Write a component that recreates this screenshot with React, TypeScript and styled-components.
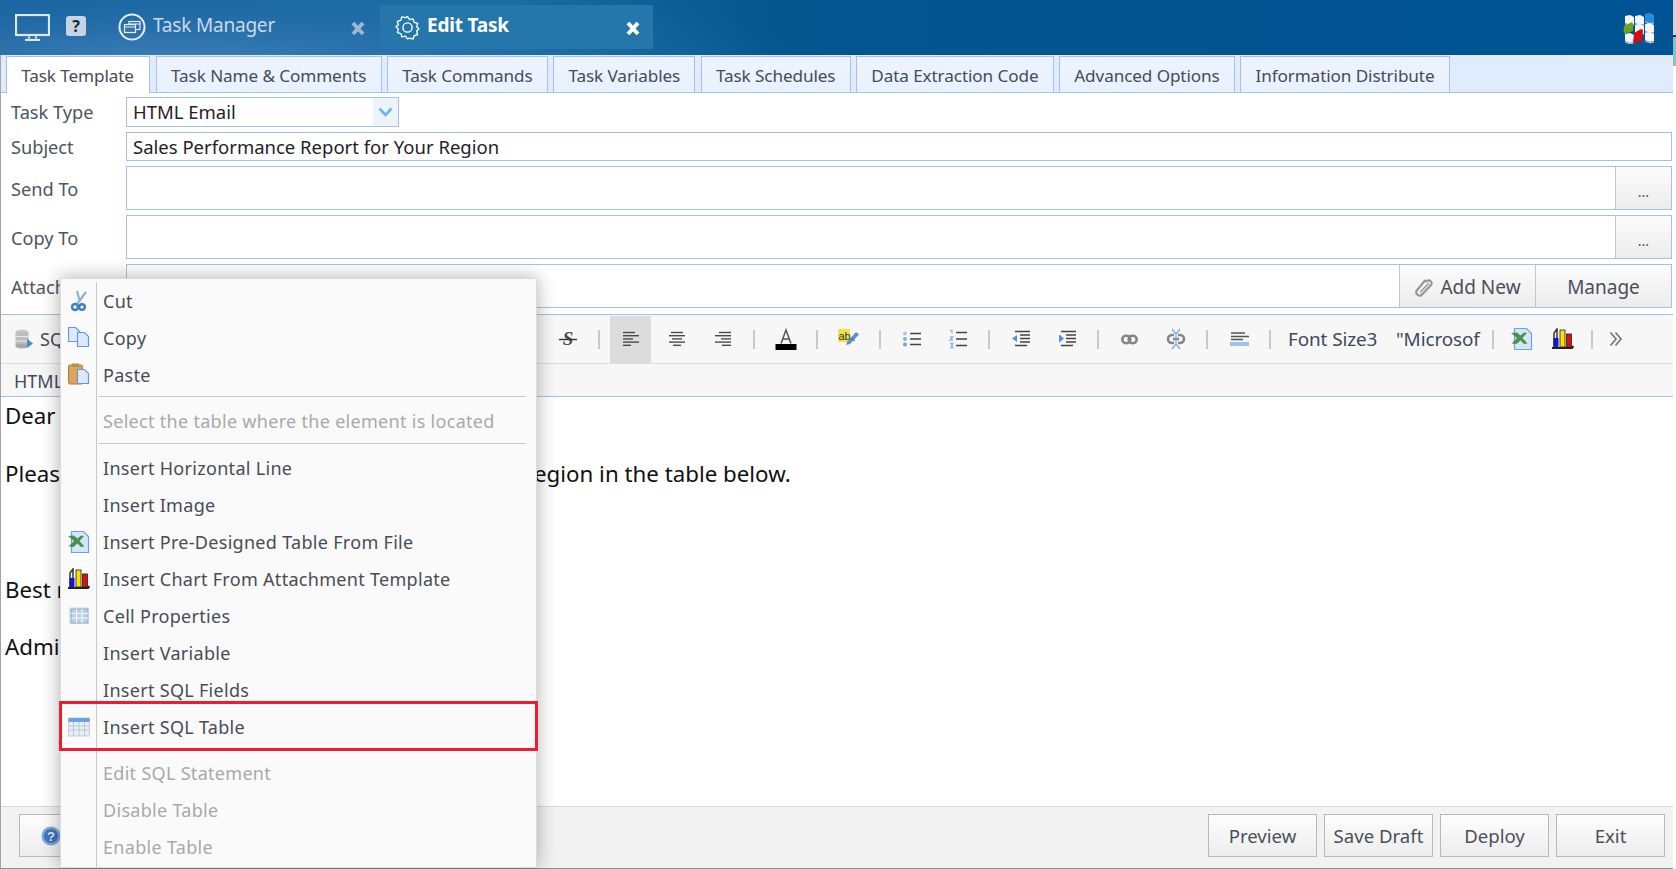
import React from 'react';
import styled, { createGlobalStyle } from 'styled-components';

const GlobalStyle = createGlobalStyle`
  html, body {
    margin: 0;
    padding: 0;
    background: #fff;
    overflow: hidden;
  }
  * {
    box-sizing: border-box;
  }
`;

const Page = styled.div`
  width: 1676px;
  height: 869px;
  display: flex;
  font-family: 'Noto Sans', 'Liberation Sans', sans-serif;
  color: #444c58;
`;

const Edge = styled.div`
  width: 3px;
  background: linear-gradient(180deg, #d4d4d4 0, #d4d4d4 35px, #333 35px, #333 37px, #79c9c0 37px, #79c9c0 66px, #fff 66px);
`;

const Shell = styled.div`
  position: relative;
  width: 1673px;
  display: flex;
  flex-direction: column;
`;

const Header = styled.div`
  height: 55px;
  flex: none;
  display: flex;
  align-items: flex-start;
  padding-left: 15px;
  background:
    radial-gradient(ellipse 640px 90px at 170px 62px, #3a7db5 0, rgba(40, 110, 170, 0.55) 55%, rgba(20, 90, 150, 0) 100%),
    linear-gradient(90deg, #14609d 0, #196ca4 30%, #04568f 46%, #005493 100%);
`;

const MonitorSlot = styled.div`
  width: 51px;
  height: 27px;
  margin-top: 14px;
`;

const HelpBadge = styled.div`
  width: 20px;
  height: 20px;
  margin-top: 16px;
  border-radius: 3px;
  background: #c5d5e5;
  color: #1b2a3a;
  font-size: 16px;
  font-weight: 700;
  line-height: 20px;
  text-align: center;
`;

const ManagerTab = styled.div`
  width: 262px;
  height: 44px;
  margin: 5px 0 0 32px;
  display: flex;
  align-items: center;
  color: #c9dae8;
  font-size: 19px;
  letter-spacing: -0.2px;
`;

const EditTab = styled(ManagerTab)`
  width: 273px;
  margin-left: 0;
  padding-left: 15px;
  background: #2577ab;
  color: #fff;
  font-weight: 700;
`;

const HeaderLabel = styled.span`
  margin-left: 7px;
  flex: 1;
  position: relative;
  top: -2px;
`;

const CloseMark = styled.span<{ $dim?: boolean }>`
  display: flex;
  position: relative;
  top: 1px;
  margin-right: ${(props) => (props.$dim ? '15px' : '13px')};
  color: ${(props) => (props.$dim ? '#9ab8cf' : '#fff')};
`;

const LogoSlot = styled.div`
  margin: 12px 19px 0 auto;
`;

const Main = styled.div`
  flex: 1;
  min-height: 0;
  display: flex;
  flex-direction: column;
  border-left: 1px solid #a4a4a4;
  border-bottom: 1px solid #8e8e8e;
`;

const TabBar = styled.div`
  height: 38px;
  flex: none;
  display: flex;
  gap: 5.5px;
  align-items: flex-end;
  padding-left: 5px;
  background: #e0ecfc;
  border-bottom: 1px solid #a3c2ea;
`;

const Tab = styled.div<{ $active?: boolean }>`
  height: ${(props) => (props.$active ? '37px' : '36px')};
  margin-bottom: ${(props) => (props.$active ? '-1px' : '0')};
  padding: 1px ${(props) => (props.$active ? 15.5 : 14.15)}px 0 14.15px;
  display: flex;
  align-items: center;
  font-size: 17.15px;
  letter-spacing: -0.1px;
  white-space: nowrap;
  color: #444c58;
  background: ${(props) => (props.$active ? '#fff' : 'linear-gradient(180deg, #eef4ff, #e8f1fe)')};
  border: 1px solid #a3c2ea;
  border-bottom: ${(props) => (props.$active ? 'none' : '0')};
`;

const Form = styled.div`
  flex: none;
  display: flex;
  flex-direction: column;
  gap: 5px;
  padding: 4px 1px 6px 10px;
`;

const FormRow = styled.div<{ $height: number }>`
  height: ${(props) => props.$height}px;
  display: flex;
  align-items: center;
`;

const FieldLabel = styled.div`
  width: 115px;
  flex: none;
  font-size: 18.2px;
  color: #4d5560;
`;

const TallLabel = styled(FieldLabel)`
  padding-top: 2px;
`;

const Field = styled.div<{ $width?: number }>`
  flex: ${(props) => (props.$width ? 'none' : '1')};
  width: ${(props) => (props.$width ? `${props.$width}px` : 'auto')};
  height: 100%;
  display: flex;
  align-items: center;
  border: 1px solid #a3c2ea;
  background: #fff;
`;

const FieldValue = styled.div`
  flex: 1;
  padding-left: 6px;
  font-size: 18.5px;
  color: #1f2328;
`;

const SelectValue = styled(FieldValue)`
  padding-bottom: 2px;
`;

const SelectArrow = styled.div`
  width: 25px;
  height: 100%;
  display: flex;
  align-items: center;
  justify-content: center;
  background: #edf3fb;
`;

const FieldButton = styled.div<{ $width: number }>`
  width: ${(props) => props.$width}px;
  flex: none;
  height: 100%;
  padding-top: 2px;
  display: flex;
  align-items: center;
  justify-content: center;
  gap: 6px;
  font-size: 19px;
  color: #46505c;
  background: linear-gradient(180deg, #fcfcfc, #ececec);
  border-left: 1px solid #c6c6c6;
`;

const Ellipsis = styled.span`
  font-size: 14px;
  position: relative;
  top: 2px;
`;

const Toolbar = styled.div`
  height: 50px;
  flex: none;
  display: flex;
  align-items: center;
  background: #f7f7f7;
  border-top: 1px solid #a3c2ea;
  border-bottom: 1px solid #d6dee6;
`;

const SourceGroup = styled.div`
  width: 543.5px;
  flex: none;
  display: flex;
  align-items: center;
  gap: 6px;
  padding-left: 13px;
  font-size: 18px;
`;

const ToolButton = styled.div<{ $active?: boolean; $tight?: boolean; $width?: number }>`
  width: ${(props) => props.$width ?? 41}px;
  height: 47px;
  margin: 0 ${(props) => (props.$tight ? 0 : 2.5)}px;
  flex: none;
  display: flex;
  align-items: center;
  justify-content: center;
  background: ${(props) => (props.$active ? '#dcdcdc' : 'transparent')};
`;

const ToolSep = styled.div`
  width: 2px;
  height: 19px;
  margin: 0 7.5px;
  flex: none;
  background: #c9c9c9;
`;

const FontGroup = styled.div`
  margin-left: 9.5px;
  flex: none;
  display: flex;
`;

const ToolText = styled.div<{ $width: number }>`
  width: ${(props) => props.$width}px;
  flex: none;
  font-size: 18.9px;
  letter-spacing: -0.1px;
  white-space: nowrap;
  color: #3d4a5c;
`;

const ModeBar = styled.div`
  height: 33px;
  flex: none;
  padding: 5px 0 0 13px;
  font-size: 18px;
  background: #f7f7f7;
  border-bottom: 1px solid #a3c2ea;
`;

const Editor = styled.div`
  flex: 1;
  min-height: 0;
  padding: 2px 0 0 4px;
  color: #111;
  font-size: 22.3px;
  background: #fff;
`;

const Para = styled.p`
  margin: 0 0 23px;
  height: 34px;
  line-height: 34px;
  white-space: nowrap;

  &:first-child {
    margin-bottom: 24px;
  }
`;

const BlankLine = styled.div`
  height: 36px;
  margin-bottom: 23px;
`;

const Footer = styled.div`
  height: 62px;
  flex: none;
  display: flex;
  align-items: flex-start;
  gap: 7px;
  padding: 7px 8px 0 18px;
  background: #f2f2f2;
  border-top: 1px solid #d9d9d9;
`;

const FooterButton = styled.div<{ $pushRight?: boolean }>`
  width: 109px;
  height: 43px;
  padding-bottom: 1px;
  margin-left: ${(props) => (props.$pushRight ? 'auto' : '0')};
  display: flex;
  align-items: center;
  justify-content: center;
  font-size: 18.6px;
  color: #4a505a;
  background: linear-gradient(180deg, #fdfdfd, #ededed);
  border: 1px solid #b8b8b8;
`;

const HelpButton = styled(FooterButton)`
  justify-content: flex-start;
  padding: 0 0 0 21px;
`;

const Menu = styled.div`
  position: absolute;
  left: 60px;
  top: 278px;
  width: 477px;
  height: 590px;
  padding-top: 3px;
  background: #fafafa;
  border: 1px solid #dcdcdc;
  box-shadow: 0 0 18px rgba(0, 0, 0, 0.32);
  display: flex;
  flex-direction: column;
`;

const MenuItem = styled.div<{ $disabled?: boolean }>`
  height: 37px;
  flex: none;
  display: flex;
  align-items: center;
  font-size: 18px;
  letter-spacing: 0.3px;
  color: ${(props) => (props.$disabled ? '#a9a9a9' : '#474d57')};
`;

const Gutter = styled.div`
  width: 36px;
  height: 100%;
  flex: none;
  display: flex;
  align-items: center;
  justify-content: center;
  border-right: 1px solid #c9c9c9;
`;

const MenuLabel = styled.span`
  margin-left: 6px;
`;

const MenuSep = styled.div`
  height: 9.5px;
  flex: none;
  display: flex;
`;

const SepLine = styled.div`
  flex: 1;
  height: 1px;
  margin: 3px 10px 0 1px;
  background: #c9c9c9;
`;

const MenuFill = styled.div`
  flex: 1;
  display: flex;
`;

const Marker = styled.div`
  position: absolute;
  left: -2px;
  top: 422px;
  width: 479px;
  height: 50px;
  border: 3px solid #ee1c2e;
`;

const MonitorIcon = () => (
  <svg width="35" height="27" viewBox="0 0 35 27" fill="none" stroke="#dfe8f1" strokeWidth="2.200">
    <rect x="1" y="1" width="33" height="20" />
    <path d="M14 22.500v2M21 22.500v2" />
    <path d="M10 26h15" />
  </svg>
);

const WindowsCircleIcon = () => (
  <svg width="28" height="28" viewBox="0 0 28 28" fill="none" stroke="#e6eef5">
    <circle cx="14" cy="14" r="12.500" strokeWidth="2" />
    <rect x="11" y="8.500" width="11" height="8" strokeWidth="1.200" />
    <rect x="6.500" y="11.500" width="11" height="8" strokeWidth="1.200" fill="#3474a8" />
    <path d="M6.500 14h11M11 11h11" strokeWidth="1" />
  </svg>
);

const GearIcon = () => (
  <svg width="25" height="27" viewBox="0 0 24 24" fill="none" stroke="#fff" strokeWidth="1.300" strokeLinejoin="round">
    <path d="M12 1.500l2 3 3.400-.7 1 3.300 3.300 1-.9 3.400 2.200 1.500-2.200 2.600.9 3.300-3.300 1-1 3.100-3.400-.7L12 23l-2-2.700-3.400.7-1-3.100-3.300-1 .9-3.300L1 11l2.200-1.500-.9-3.400 3.300-1 1-3.300 3.400.7z" />
    <circle cx="12" cy="12" r="4.400" />
  </svg>
);

const CloseIcon = () => (
  <svg width="14" height="15" viewBox="0 0 14 15" stroke="currentColor" strokeWidth="4">
    <path d="M2 2l10 11M12 2L2 13" />
  </svg>
);

const logoBlocks: [number, number, string][] = [
  [3, 3, '#f6f6f6'],
  [13, 3, '#f6f6f6'],
  [23, 1, '#1f8fe6'],
  [13, 12, '#f6f6f6'],
  [23, 11, '#f6f6f6'],
  [3, 21, '#f6f6f6'],
  [23, 20, '#f6f6f6'],
];

const LogoIcon = () => (
  <svg width="32" height="32" viewBox="0 0 32 32">
    {logoBlocks.map(([x, y, color], index) => (
      <g key={index}>
        <path d={`M${x} ${y + 1}l5-1 4 2v7l-4 1-5-2z`} fill={color} />
        <path d={`M${x} ${y + 8}l5 2 4-1v1.500l-4 1-5-2z`} fill="#aebbc8" />
      </g>
    ))}
    <path d="M2 14l8-4 1 2v7l-8 3-1.500-2z" fill="#6aa51c" />
    <path d="M12 21l7-4 2 1-1 11-9 2z" fill="#dc0a12" />
  </svg>
);

const ChevronDownIcon = () => (
  <svg width="15" height="10" viewBox="0 0 15 10" fill="none" stroke="#6cb6ec" strokeWidth="2.600">
    <path d="M1.500 1.500L7.500 8l6-6.500" />
  </svg>
);

const PaperclipIcon = () => (
  <svg width="20" height="20" viewBox="0 0 20 20" fill="none" stroke="#969696" strokeWidth="2.200" strokeLinecap="round">
    <path d="M12.500 4.500a2.800 2.800 0 0 1 4.500 3.500L8 17.500a3.300 3.300 0 0 1-5.200-4L11 3.500" />
    <path d="M14.500 6.500L6.500 15" strokeWidth="1.400" />
  </svg>
);

const DatabaseIcon = () => (
  <svg width="20" height="22" viewBox="0 0 20 22">
    <ellipse cx="8" cy="4" rx="6.500" ry="2.500" fill="#c9c9c9" />
    <rect x="1.500" y="4" width="13" height="14" fill="#bdbdbd" />
    <ellipse cx="8" cy="18" rx="6.500" ry="2.500" fill="#a8a8a8" />
    <path d="M1.500 8.500h13M1.500 13h13" stroke="#e8e8e8" />
    <path d="M13 11l6 4.500-6 4.500z" fill="#3d8fc4" />
  </svg>
);

const StrikeIcon = () => (
  <svg width="20" height="18" viewBox="0 0 20 18">
    <text x="10" y="15" textAnchor="middle" fontFamily="Liberation Serif" fontSize="19" fontWeight="700" fontStyle="italic" fill="#4a4a4a">
      S
    </text>
    <path d="M1 9.500h18" stroke="#333" strokeWidth="1.400" />
  </svg>
);

const lineSets: Record<string, [number, number][]> = {
  left: [[2, 14], [2, 18], [2, 12], [2, 18], [2, 10]],
  center: [[4, 16], [2, 18], [5, 15], [2, 18], [6, 14]],
  right: [[6, 18], [2, 18], [8, 18], [2, 18], [9, 18]],
};

const AlignIcon = ({ kind }: { kind: string }) => (
  <svg width="20" height="18" viewBox="0 0 20 18" stroke="#4a4a4a" strokeWidth="1.400">
    {lineSets[kind].map(([a, b], index) => (
      <path key={index} d={`M${a} ${2.500 + index * 3.200}H${b}`} />
    ))}
  </svg>
);

const TextColorIcon = () => (
  <svg width="22" height="22" viewBox="0 0 22 22">
    <path d="M6 15.500L11 2l5 13.500M7.500 11h7" fill="none" stroke="#555" strokeWidth="1.500" />
    <rect x="0.500" y="16" width="21" height="6" fill="#000" />
  </svg>
);

const HighlightIcon = () => (
  <svg width="22" height="22" viewBox="0 0 22 22">
    <rect x="0" y="1" width="12" height="13" fill="#f0e34a" />
    <text x="0.500" y="11.500" fontFamily="Liberation Sans" fontSize="11" fill="#333">
      ab
    </text>
    <path d="M9 14l9-10 3 2.500L12 16l-4 1z" fill="#5b8fd0" />
    <path d="M13 10l4 3" stroke="#2f5f9e" strokeWidth="1" />
  </svg>
);

const BulletIcon = () => (
  <svg width="20" height="18" viewBox="0 0 20 18">
    <circle cx="3" cy="3.500" r="2" fill="#a8c8f0" />
    <circle cx="3" cy="9" r="2" fill="#7fb0ea" />
    <circle cx="3" cy="14.500" r="2" fill="#6aa2e6" />
    <path d="M8 3.500h11M8 9h11M8 14.500h11" stroke="#444" strokeWidth="1.500" />
  </svg>
);

const NumberIcon = () => (
  <svg width="20" height="20" viewBox="0 0 20 20">
    <path d="M2 1.500h2v3M2 8h3L2 11h3M2 14.500h3l-1.500 2 1.500 2H2" fill="none" stroke="#8fb6ea" strokeWidth="1.300" />
    <path d="M8 3.500h11M8 10h11M8 16.500h11" stroke="#444" strokeWidth="1.500" />
  </svg>
);

const IndentIcon = ({ flip }: { flip?: boolean }) => (
  <svg width="20" height="18" viewBox="0 0 20 18">
    <path d="M4 1.500h15M9 5h10M9 8.500h10M9 12h10M4 15.500h12" stroke="#444" strokeWidth="1.500" />
    {flip ? <path d="M7 8.500l-4-3.500h-1v7h1z" fill="#4f94e4" /> : <path d="M1 8.500l5-3.500v7z" fill="#4f94e4" />}
  </svg>
);

const LinkIcon = () => (
  <svg width="17" height="11" viewBox="0 0 17 11" fill="none" stroke="#858585" strokeWidth="2.600">
    <rect x="1.300" y="1.800" width="8" height="7.400" rx="3.700" />
    <rect x="7.700" y="1.800" width="8" height="7.400" rx="3.700" />
  </svg>
);

const UnlinkIcon = () => (
  <svg width="20" height="22" viewBox="0 0 20 22" fill="none" strokeWidth="2.600">
    <path d="M8 7H6a4 4 0 0 0 0 8h2M12 7h2a4 4 0 0 1 0 8h-2" stroke="#858585" />
    <path d="M7 11h6" stroke="#858585" />
    <path d="M6 1l4 5 4-5M10 6v10M6 21l4-5 4 5" stroke="#7fa9e8" strokeWidth="1.300" />
  </svg>
);

const RuleIcon = () => (
  <svg width="20" height="16" viewBox="0 0 20 16">
    <path d="M2 2h14M2 5.500h18M2 8.500h12" stroke="#555" strokeWidth="1.300" />
    <rect x="1" y="11" width="19" height="4" fill="#9ec3f0" />
  </svg>
);

const MoreIcon = () => (
  <svg width="14" height="16" viewBox="0 0 14 16" fill="none" stroke="#6d7c8c" strokeWidth="1.800">
    <path d="M1.500 1.500L7 8l-5.500 6.500M6.500 1.500L12 8l-5.500 6.500" />
  </svg>
);

const ScissorsIcon = () => (
  <svg width="22" height="22" viewBox="0 0 22 22" fill="none">
    <path d="M9 1l3 11M18 2L9 14" stroke="#8eb1dc" strokeWidth="2.200" />
    <circle cx="7" cy="17" r="3" stroke="#3b7fc4" strokeWidth="2.400" />
    <circle cx="14" cy="17" r="2.800" stroke="#3b7fc4" strokeWidth="2.400" />
  </svg>
);

const Doc = ({ x, y }: { x: number; y: number }) => (
  <path d={`M${x + 0.500} ${y + 0.500}h7l4 4v10h-11z`} fill="#dce9fb" stroke="#6797d6" strokeWidth="1.200" />
);

const CopyIcon = () => (
  <svg width="22" height="22" viewBox="0 0 22 22">
    <Doc x={0} y={0} />
    <Doc x={9} y={5} />
  </svg>
);

const PasteIcon = () => (
  <svg width="22" height="23" viewBox="0 0 22 23">
    <rect x="0.500" y="2" width="14" height="19" rx="1.500" fill="#dba55c" stroke="#a97a3a" />
    <rect x="4" y="0.500" width="7" height="3.500" fill="#b98d4f" />
    <Doc x={9} y={6} />
  </svg>
);

const ExcelIcon = () => (
  <svg width="22" height="22" viewBox="0 0 22 22">
    <path d="M3.500 0.500h12l5 5v16h-17z" fill="#d6e6fa" stroke="#6ea2dd" strokeWidth="1.200" />
    <path d="M0 5l6-.5 3.500 3 3.500-3 3 .5-4.500 5 5 5.500-3.500.5-3.500-3.500-4 3.500-5-.5 5.500-5.500z" fill="#4a9150" />
  </svg>
);

const ChartIcon = () => (
  <svg width="23" height="22" viewBox="0 0 23 22">
    <path d="M3 19V5l3-4v15" fill="none" stroke="#333" strokeWidth="1.500" />
    <rect x="2.500" y="10" width="5" height="9" fill="#1515d8" />
    <rect x="9" y="2" width="5" height="17" fill="#f7e200" stroke="#222" strokeWidth="0.800" />
    <rect x="15.500" y="6" width="5" height="13" fill="#e01010" stroke="#222" strokeWidth="0.800" />
    <path d="M1 20h20l1.500-2" fill="none" stroke="#222" strokeWidth="2" />
  </svg>
);

const CellIcon = () => (
  <svg width="21" height="20" viewBox="0 0 21 20">
    <rect x="1" y="1" width="19" height="17" rx="1.500" fill="#c3d8ee" opacity="0.500" />
    <rect x="3" y="3" width="17" height="14" fill="#bcd0ea" stroke="#8da7c8" />
    <path d="M3 7.500h17M3 12h17M8.500 3v14M14 3v14" stroke="#f1f6fc" strokeWidth="1.200" />
  </svg>
);

const SqlTableIcon = () => (
  <svg width="22" height="20" viewBox="0 0 22 20">
    <rect x="0.500" y="1" width="21" height="18" fill="#e9eef7" stroke="#c4cddb" />
    <rect x="0.500" y="1" width="21" height="4" fill="#6f9fe3" />
    <path d="M0.500 9h21M0.500 13h21M5.500 5v14M11 5v14M16.500 5v14" stroke="#b9c6da" strokeWidth="1" />
  </svg>
);

const HelpRoundIcon = () => (
  <svg width="20" height="20" viewBox="0 0 20 20">
    <circle cx="10" cy="10" r="9.500" fill="#7ea6d6" />
    <circle cx="10" cy="10" r="7" fill="#3f75b7" />
    <text x="10" y="14.500" textAnchor="middle" fontFamily="Liberation Sans" fontSize="13" fontWeight="700" fill="#dfe9f5">
      ?
    </text>
  </svg>
);

const tabs = [
  'Task Name & Comments',
  'Task Commands',
  'Task Variables',
  'Task Schedules',
  'Data Extraction Code',
  'Advanced Options',
  'Information Distribute',
];

interface MenuEntry {
  label: string;
  icon?: React.ReactNode;
  disabled?: boolean;
}

const renderEntries = (entries: MenuEntry[]) =>
  entries.map((entry) => (
    <MenuItem key={entry.label} $disabled={entry.disabled}>
      <Gutter>{entry.icon}</Gutter>
      <MenuLabel>{entry.label}</MenuLabel>
    </MenuItem>
  ));

const Divider = () => (
  <MenuSep>
    <Gutter />
    <SepLine />
  </MenuSep>
);

export default function App() {
  return (
    <>
      <GlobalStyle />
      <Page>
        <Shell>
          <Header>
            <MonitorSlot>
              <MonitorIcon />
            </MonitorSlot>
            <HelpBadge>?</HelpBadge>
            <ManagerTab>
              <WindowsCircleIcon />
              <HeaderLabel>Task Manager</HeaderLabel>
              <CloseMark $dim>
                <CloseIcon />
              </CloseMark>
            </ManagerTab>
            <EditTab>
              <GearIcon />
              <HeaderLabel>Edit Task</HeaderLabel>
              <CloseMark>
                <CloseIcon />
              </CloseMark>
            </EditTab>
            <LogoSlot>
              <LogoIcon />
            </LogoSlot>
          </Header>
          <Main>
            <TabBar>
              <Tab $active>Task Template</Tab>
              {tabs.map((tab) => (
                <Tab key={tab}>{tab}</Tab>
              ))}
            </TabBar>
            <Form>
              <FormRow $height={30}>
                <FieldLabel>Task Type</FieldLabel>
                <Field $width={273}>
                  <SelectValue>HTML Email</SelectValue>
                  <SelectArrow>
                    <ChevronDownIcon />
                  </SelectArrow>
                </Field>
              </FormRow>
              <FormRow $height={29}>
                <FieldLabel>Subject</FieldLabel>
                <Field>
                  <FieldValue>Sales Performance Report for Your Region</FieldValue>
                </Field>
              </FormRow>
              <FormRow $height={44}>
                <TallLabel>Send To</TallLabel>
                <Field>
                  <FieldValue />
                  <FieldButton $width={56}>
                    <Ellipsis>...</Ellipsis>
                  </FieldButton>
                </Field>
              </FormRow>
              <FormRow $height={44}>
                <TallLabel>Copy To</TallLabel>
                <Field>
                  <FieldValue />
                  <FieldButton $width={56}>
                    <Ellipsis>...</Ellipsis>
                  </FieldButton>
                </Field>
              </FormRow>
              <FormRow $height={44}>
                <TallLabel>Attachments</TallLabel>
                <Field>
                  <FieldValue />
                  <FieldButton $width={136}>
                    <PaperclipIcon />
                    Add New
                  </FieldButton>
                  <FieldButton $width={136}>Manage</FieldButton>
                </Field>
              </FormRow>
            </Form>
            <Toolbar>
              <SourceGroup>
                <DatabaseIcon />
                SQL
              </SourceGroup>
              <ToolButton>
                <StrikeIcon />
              </ToolButton>
              <ToolSep />
              <ToolButton $active>
                <AlignIcon kind="left" />
              </ToolButton>
              <ToolButton>
                <AlignIcon kind="center" />
              </ToolButton>
              <ToolButton>
                <AlignIcon kind="right" />
              </ToolButton>
              <ToolSep />
              <ToolButton>
                <TextColorIcon />
              </ToolButton>
              <ToolSep />
              <ToolButton>
                <HighlightIcon />
              </ToolButton>
              <ToolSep />
              <ToolButton>
                <BulletIcon />
              </ToolButton>
              <ToolButton>
                <NumberIcon />
              </ToolButton>
              <ToolSep />
              <ToolButton>
                <IndentIcon />
              </ToolButton>
              <ToolButton>
                <IndentIcon flip />
              </ToolButton>
              <ToolSep />
              <ToolButton>
                <LinkIcon />
              </ToolButton>
              <ToolButton>
                <UnlinkIcon />
              </ToolButton>
              <ToolSep />
              <ToolButton>
                <RuleIcon />
              </ToolButton>
              <ToolSep />
              <FontGroup>
                <ToolText $width={108}>Font Size3</ToolText>
                <ToolText $width={88}>"Microsof</ToolText>
              </FontGroup>
              <ToolSep />
              <ToolButton $tight>
                <ExcelIcon />
              </ToolButton>
              <ToolButton $tight>
                <ChartIcon />
              </ToolButton>
              <ToolSep />
              <ToolButton $tight $width={32}>
                <MoreIcon />
              </ToolButton>
            </Toolbar>
            <ModeBar>HTML</ModeBar>
            <Editor>
              <Para>Dear Customer,</Para>
              <Para>Please review the sales performance data of your region in the table below.</Para>
              <BlankLine />
              <Para>Best regards,</Para>
              <Para>Administrator</Para>
            </Editor>
            <Footer>
              <HelpButton>
                <HelpRoundIcon />
              </HelpButton>
              <FooterButton $pushRight>Preview</FooterButton>
              <FooterButton>Save Draft</FooterButton>
              <FooterButton>Deploy</FooterButton>
              <FooterButton>Exit</FooterButton>
            </Footer>
          </Main>
          <Menu>
            {renderEntries([
              { label: 'Cut', icon: <ScissorsIcon /> },
              { label: 'Copy', icon: <CopyIcon /> },
              { label: 'Paste', icon: <PasteIcon /> },
            ])}
            <Divider />
            {renderEntries([{ label: 'Select the table where the element is located', disabled: true }])}
            <Divider />
            {renderEntries([
              { label: 'Insert Horizontal Line' },
              { label: 'Insert Image' },
              { label: 'Insert Pre-Designed Table From File', icon: <ExcelIcon /> },
              { label: 'Insert Chart From Attachment Template', icon: <ChartIcon /> },
              { label: 'Cell Properties', icon: <CellIcon /> },
              { label: 'Insert Variable' },
              { label: 'Insert SQL Fields' },
              { label: 'Insert SQL Table', icon: <SqlTableIcon /> },
            ])}
            <Divider />
            {renderEntries([
              { label: 'Edit SQL Statement', disabled: true },
              { label: 'Disable Table', disabled: true },
              { label: 'Enable Table', disabled: true },
            ])}
            <MenuFill>
              <Gutter />
            </MenuFill>
            <Marker />
          </Menu>
        </Shell>
        <Edge />
      </Page>
    </>
  );
}
